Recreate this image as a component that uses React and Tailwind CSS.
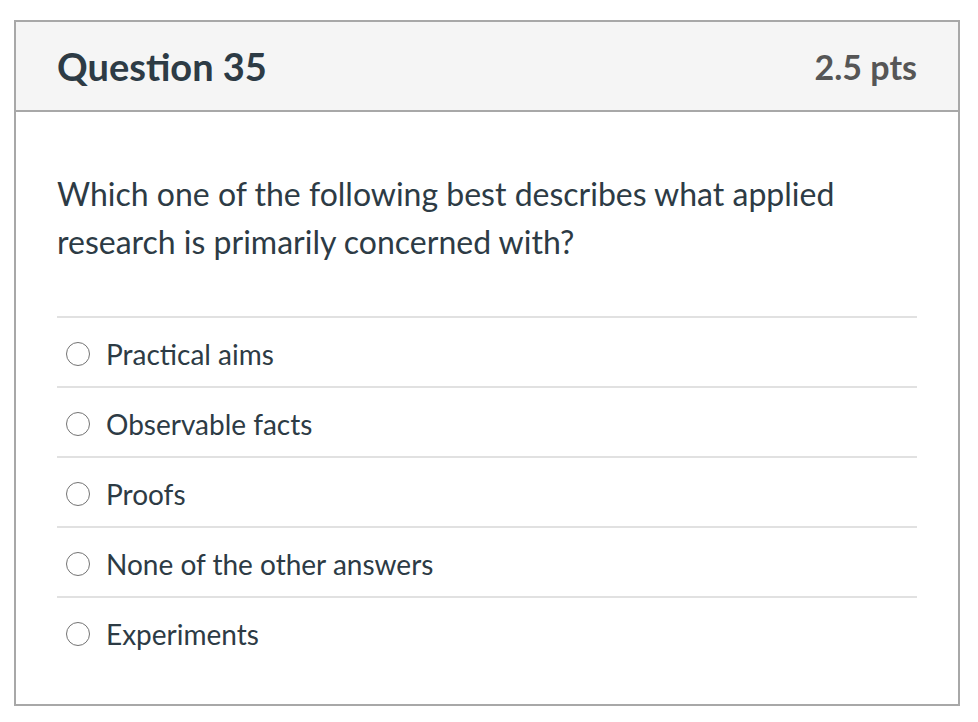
export default function App() {
  const options = ["Practical aims", "Observable facts", "Proofs", "None of the other answers", "Experiments"];
  return (
    <div className="w-[978px] h-[722px] bg-white pt-[20px] pl-[14px]" style={{ fontFamily: "Lato, 'Noto Sans', sans-serif" }}>
      <div className="w-[946px] h-[686px] border-2 border-[#a8a8a8] flex flex-col">
        <div className="h-[90px] bg-[#f5f5f5] border-b-2 border-[#a8a8a8] flex items-center justify-between px-[41px]">
          <div className="text-[38px] font-bold text-[#2d3b45]">Question 35</div>
          <div className="text-[34px] font-bold text-[#565656]">2.5 pts</div>
        </div>
        <div className="px-[41px] pt-[58px]">
          <div className="text-[32px] leading-[48px] text-[#2d3b45]">
            Which one of the following best describes what applied<br />research is primarily concerned with?
          </div>
          <div className="mt-[50px]">
            {options.map((o) => (
              <div key={o} className="h-[70px] pt-[4px] flex items-center border-t-2 border-[#e1e1e1]">
                <div className="w-[24px] h-[24px] rounded-full border-[1.5px] border-[#737373] ml-[9px] mr-[16px] shrink-0" />
                <div className="text-[28px] text-[#2d3b45]">{o}</div>
              </div>
            ))}
          </div>
        </div>
      </div>
    </div>
  );
}
